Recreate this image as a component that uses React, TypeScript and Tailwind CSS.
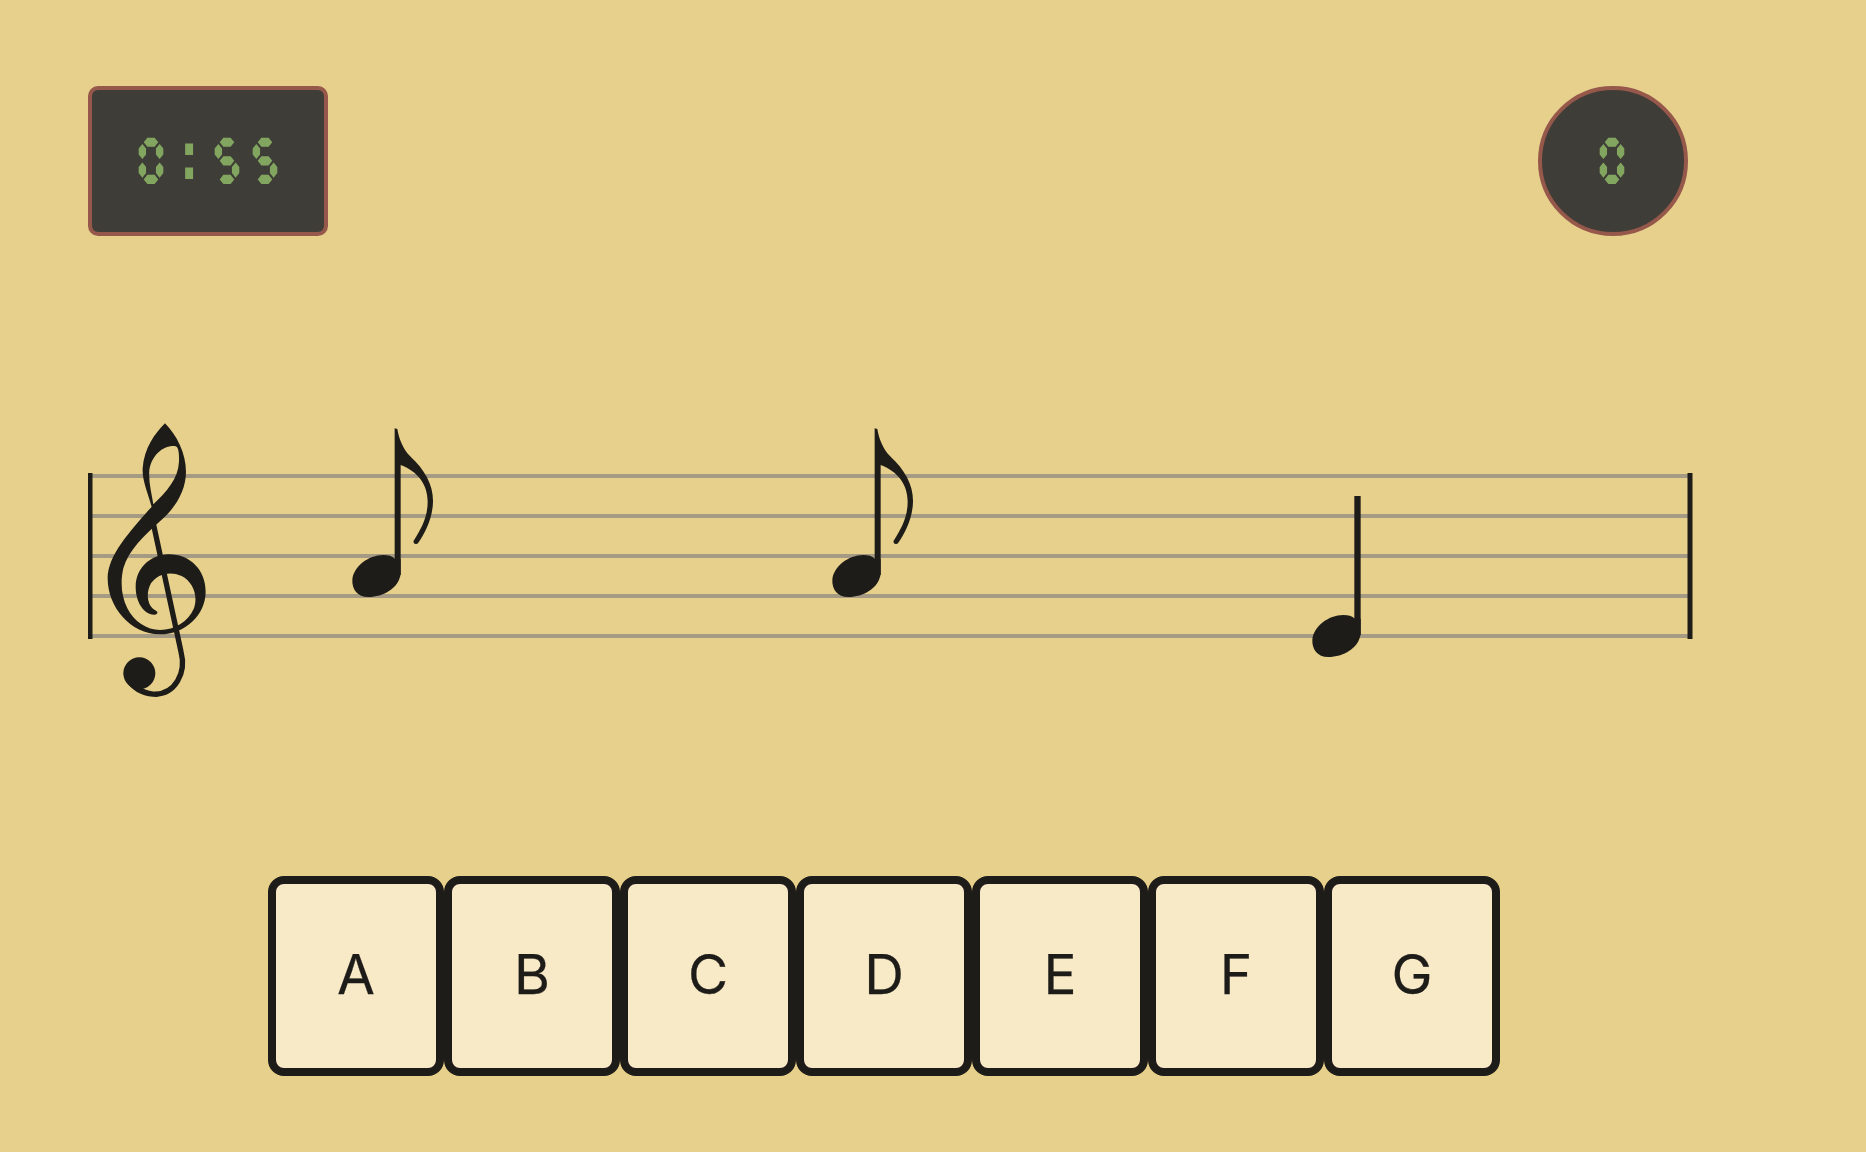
const INK = "#1e1c18";

function Note({ x, y, flag }: { x: number; y: number; flag: boolean }) {
  return (
    <g transform={`translate(${x} ${y}) scale(0.3333)`} fill={INK}>
      <path d="M182 462 C176 505 130 531 85 531 C52 531 36 508 37 480 C40 440 85 405 130 405 C145 405 156 408 165 416 L182 416 Z" />
      {flag ? (
        <path d="M164 25 L172 27 C176 50 186 85 212 110 C255 150 280 195 279 245 C278 295 255 340 235 368 C230 375 218 372 221 362 C245 325 263 290 263 245 C263 195 235 155 182 135 L182 465 L164 465 Z" />
      ) : (
        <rect x="163" y="48" width="19" height="417" />
      )}
    </g>
  );
}

function Clef() {
  return (
    <g transform="translate(-18 0) scale(0.3333)" fill={INK}>
      <path
        fillRule="evenodd"
        d="M285 40 C320 75 348 130 348 185 C348 245 312 300 265 338 C225 375 175 420 160 475 C150 520 155 560 172 595 C192 635 230 660 270 660 C315 660 355 635 372 595 C385 555 368 515 335 498 C300 482 262 492 243 520 C226 550 232 590 258 602 C266 606 262 615 252 614 C220 612 197 575 197 530 C197 480 235 435 295 433 C360 432 407 480 407 545 C407 615 345 673 270 673 C180 673 113 590 113 505 C113 435 180 365 245 290 C232 245 216 210 218 175 C222 115 255 70 285 40 Z M315 108 C280 105 245 135 238 180 C235 215 245 250 250 283 C290 245 325 205 327 155 C328 125 325 110 315 108 Z"
      />
      <path d="M251 345 L333 725 C350 790 315 852 255 853" fill="none" stroke={INK} strokeWidth="16" />
      <path d="M172 820 C195 850 225 861 262 861 L262 845 C245 845 230 841 215 833 Z" />
      <circle cx="208" cy="790" r="48" />
    </g>
  );
}

function Staff() {
  return (
    <svg width="1606" height="300" viewBox="88 410 1606 300" className="mt-[174px] block">
      {[476, 516, 556, 596, 636].map((y) => (
        <rect key={y} x="92" y={y - 2} width="1596" height="4" fill="#a59a83" />
      ))}
      <rect x="88" y="473" width="4.5" height="166" fill={INK} />
      <rect x="1687.5" y="473" width="5" height="166" fill={INK} />
      <g transform="translate(88 410)"><Clef /></g>
      <Note x={340} y={420} flag />
      <Note x={820} y={420} flag />
      <Note x={1300} y={480} flag={false} />
    </svg>
  );
}

const seg = "inline-block scale-x-[0.8] tracking-[9.6px] pl-[9.6px] font-['DejaVu_Sans_Mono','Liberation_Mono',monospace] text-[#82a660] text-[64px] leading-none [-webkit-text-stroke:2px_#82a660]";

export default function App() {
  return (
    <div className="w-full h-[1152px] bg-[#e6d08b] pt-[86px] pl-[88px] overflow-hidden">
      <div className="flex justify-between w-[1600px]">
        <div className="w-[240px] h-[150px] bg-[#3f3d37] border-4 border-[#96584b] rounded-[10px] flex items-center justify-center">
          <span className={seg}>🯰<span className="inline-block -translate-y-[5px]">:</span>🯵🯵</span>
        </div>
        <div className="w-[150px] h-[150px] bg-[#3f3d37] border-4 border-[#96584b] rounded-full flex items-center justify-center">
          <span className={seg}>🯰</span>
        </div>
      </div>
      <Staff />
      <div className="flex ml-[180px] mt-[166px]">
        {["A", "B", "C", "D", "E", "F", "G"].map((l) => (
          <button
            key={l}
            className="w-[176px] h-[200px] pb-[3px] bg-[#f8e9c7] border-8 border-[#1e1c18] rounded-[16px] flex items-center justify-center font-['Inter',sans-serif] text-[55px] text-[#1e1c18] [-webkit-text-stroke:0.25px_#1e1c18]"
          >
            {l}
          </button>
        ))}
      </div>
    </div>
  );
}
